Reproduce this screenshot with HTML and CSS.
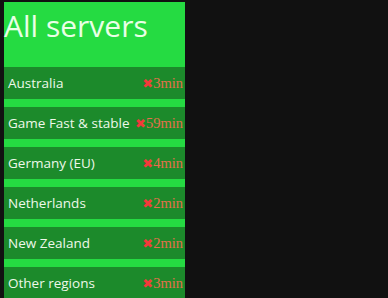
FILE: index.html
```html
<!DOCTYPE html>
<html lang="en">
<head>
    <meta charset="UTF-8">
    <title>All servers</title>
    <link rel="stylesheet" href="styles.css">
</head>
<body>
    <div class="panel">
        <h1>All servers</h1>
        <ul class="servers">
            <li><span class="name">Australia</span><span class="ping"><b>✖</b>3min</span></li>
            <li><span class="name">Game Fast &amp; stable</span><span class="ping"><b>✖</b>59min</span></li>
            <li><span class="name">Germany (EU)</span><span class="ping"><b>✖</b>4min</span></li>
            <li><span class="name">Netherlands</span><span class="ping"><b>✖</b>2min</span></li>
            <li><span class="name">New Zealand</span><span class="ping"><b>✖</b>2min</span></li>
            <li><span class="name">Other regions</span><span class="ping"><b>✖</b>3min</span></li>
        </ul>
    </div>
</body>
</html>
```

FILE: styles.css
```css
* {
    margin: 0;
    padding: 0;
    box-sizing: border-box;
}

body {
    background: #111111;
    font-family: 'Open Sans', sans-serif;
    padding: 2px 0 0 4px;
    overflow: hidden;
}

.panel {
    width: 181px;
    background: #25db42;
}

h1 {
    height: 65px;
    font-size: 30px;
    font-weight: 400;
    line-height: 48px;
    color: #e9ffe6;
}

.servers {
    list-style: none;
    display: flex;
    flex-direction: column;
    gap: 8px;
}

.servers li {
    height: 32px;
    background: #1c8a2b;
    display: flex;
    align-items: center;
    justify-content: space-between;
    padding: 0 2px 0 4px;
}

.name {
    font-size: 13.5px;
    color: #eef8ea;
}

.ping {
    font-family: 'Liberation Serif', serif;
    font-size: 14.5px;
    color: #e4704c;
}

.ping b {
    color: #f23a3a;
    font-family: 'DejaVu Sans', sans-serif;
    font-size: 13px;
}
```
